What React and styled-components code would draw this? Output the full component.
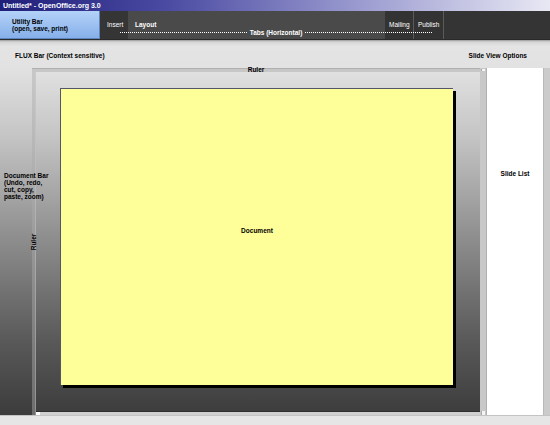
import React from 'react';
import styled, { createGlobalStyle } from 'styled-components';

const GlobalStyle = createGlobalStyle`
  html, body {
    margin: 0;
    padding: 0;
    background: #ffffff;
  }
  body {
    font-family: "Liberation Sans", Arial, sans-serif;
  }
`;

const Window = styled.div`
  width: 550px;
  height: 425px;
  overflow: hidden;
  display: flex;
  flex-direction: column;
  font-family: "Liberation Sans", Arial, sans-serif;
  font-weight: bold;
  font-size: 6.5px;
  line-height: 7px;
  color: #000;
  position: relative;
`;

const TitleBar = styled.div`
  height: 11px;
  flex: none;
  display: flex;
  align-items: center;
  padding-left: 3px;
  font-size: 7px;
  color: #fff;
  background: linear-gradient(to right, #1f1f7a 0%, #4a4aa2 30%, #9a9ad0 65%, #e8e8f4 100%);
`;

const Toolbar = styled.div`
  height: 29px;
  flex: none;
  display: flex;
  background: #343434;
  border-bottom: 1px solid #2a2a2a;
  box-sizing: border-box;
`;

const UtilityBar = styled.div`
  width: 100px;
  flex: none;
  box-sizing: border-box;
  padding: 7px 0 0 12px;
  background: linear-gradient(to bottom, #b4d2f8, #86b0ea);
  border-right: 1px solid #5d86c0;
  border-bottom: 1px solid #5d86c0;
`;

const Tabs = styled.div`
  flex: 1;
  display: flex;
  position: relative;
`;

const Tab = styled.div`
  width: ${({ width }) => width}px;
  flex: none;
  box-sizing: border-box;
  padding: 10px 0 0 ${({ pad }) => pad ?? 7}px;
  color: #fff;
  font-weight: ${({ regular }) => (regular ? 'normal' : 'bold')};
  background: ${({ tone }) => tone};
  border-right: ${({ divider }) => (divider ? '1px solid #5a5a5a' : 'none')};
`;

const TabsLabel = styled.div`
  position: absolute;
  left: 20px;
  width: 312px;
  top: 18px;
  display: flex;
  align-items: center;
  gap: 3px;
  color: #fff;
  font-size: 6.5px;
  pointer-events: none;
`;

const Dots = styled.span`
  flex: 1;
  border-top: 1px dotted #ffffff;
`;

const FluxBar = styled.div`
  height: 28px;
  flex: none;
  display: flex;
  justify-content: space-between;
  align-items: center;
  box-sizing: border-box;
  padding: 2px 23px 0 15px;
  background: linear-gradient(to bottom, #9a9a9a 0px, #d6d6d6 2px, #e4e4e4 6px, #e2e2e2 100%);
`;

const Main = styled.div`
  flex: 1;
  display: grid;
  grid-template-columns: 32px 448px 7px 56px 7px;
  background: linear-gradient(to bottom, #e2e2e2 0%, #c4c4c4 20%, #8c8c8c 50%, #5a5a5a 78%, #3c3c3c 100%);
  position: relative;
`;

const DocBar = styled.div`
  padding: 104px 0 0 4px;
  white-space: nowrap;
  position: relative;
  z-index: 1;
`;

const Workspace = styled.div`
  display: grid;
  grid-template-columns: 4px 1fr;
  grid-template-rows: 4px 1fr 4px;
  position: relative;
`;

const RulerTop = styled.div`
  grid-column: 1 / 3;
  background: rgba(168, 168, 168, 0.45);
  border-top: 1px solid rgba(150, 150, 150, 0.5);
  box-sizing: border-box;
`;

const RulerLeft = styled.div`
  grid-row: 2 / 4;
  background: rgba(170, 170, 170, 0.45);
  border-right: 1px solid rgba(210, 210, 210, 0.35);
  box-sizing: border-box;
`;

const RulerLabel = styled.span`
  position: absolute;
  left: 50%;
  top: -2px;
  transform: translateX(-50%);
  white-space: nowrap;
`;

const RulerLabelVertical = styled.span`
  position: absolute;
  left: -7px;
  top: 50%;
  transform: translateY(-50%) rotate(-90deg);
  white-space: nowrap;
`;

const Canvas = styled.div`
  padding: 16px 0 0 24px;
`;

const Document = styled.div`
  width: 393px;
  height: 297px;
  box-sizing: border-box;
  background: #ffff99;
  border-top: 1px solid #55556a;
  border-left: 1px solid #55556a;
  box-shadow: 3px 3px 0 #000;
  display: flex;
  align-items: center;
  justify-content: center;
  padding-bottom: 13px;
`;

const HScroll = styled.div`
  background: #d0d0d0;
  border-top: 1px solid #2e2e2e;
  box-sizing: border-box;
  display: flex;
`;

const ScrollCorner = styled.span`
  width: 4px;
  height: 100%;
  background: #fff;
`;

const VScroll = styled.div`
  background: #c8c8c8;
  border-right: 1px solid #b0b0b0;
  box-sizing: border-box;
  display: flex;
  flex-direction: column;
  justify-content: space-between;
`;

const ScrollNotch = styled.span`
  display: block;
  margin: ${({ bottom }) => (bottom ? '0 1px 0 1px' : '1px 1px 0 1px')};
  height: ${({ bottom }) => (bottom ? 4 : 2)}px;
  background: #f4f4f4;
  border-left: 1px solid #aaa;
`;

const SlideList = styled.div`
  background: #ffffff;
  text-align: center;
  padding-top: 102px;
`;

const Edge = styled.div`
  background: #cbcbcb;
  border-left: 1px solid #b8b8b8;
`;

const StatusBar = styled.div`
  height: 10px;
  flex: none;
  background: #e6e6e6;
  border-top: 1px solid #c4c4c4;
  box-sizing: border-box;
`;

const App = () => (
  <>
    <GlobalStyle />
    <Window>
      <TitleBar>Untitled* - OpenOffice.org 3.0</TitleBar>
      <Toolbar>
        <UtilityBar>
          Utility Bar
          <br />
          (open, save, print)
        </UtilityBar>
        <Tabs>
          <Tab width={28} tone="#353535" regular>Insert</Tab>
          <Tab width={257} tone="#4a4a4a">Layout</Tab>
          <Tab width={29} tone="#333333" pad={4} divider regular>Mailing</Tab>
          <Tab width={30} tone="#333333" pad={4} divider regular>Publish</Tab>
          <TabsLabel>
            <Dots />
            Tabs (Horizontal)
            <Dots />
          </TabsLabel>
        </Tabs>
      </Toolbar>
      <FluxBar>
        <span>FLUX Bar (Context sensitive)</span>
        <span>Slide View Options</span>
      </FluxBar>
      <Main>
        <DocBar>
          Document Bar
          <br />
          (Undo, redo,
          <br />
          cut, copy,
          <br />
          paste, zoom)
        </DocBar>
        <Workspace>
          <RulerTop />
          <RulerLeft />
          <Canvas>
            <Document>Document</Document>
          </Canvas>
          <HScroll>
            <ScrollCorner />
          </HScroll>
          <RulerLabel>Ruler</RulerLabel>
          <RulerLabelVertical>Ruler</RulerLabelVertical>
        </Workspace>
        <VScroll>
          <ScrollNotch />
          <ScrollNotch bottom />
        </VScroll>
        <SlideList>Slide List</SlideList>
        <Edge />
      </Main>
      <StatusBar />
    </Window>
  </>
);

export default App;
